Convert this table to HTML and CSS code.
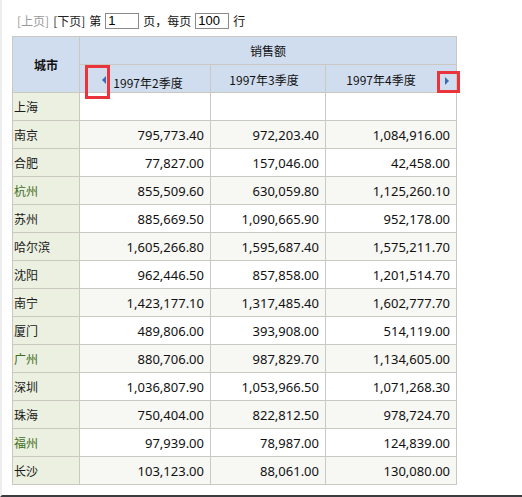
FILE: index.html
```html
<!DOCTYPE html>
<html lang="zh">
<head>
<meta charset="utf-8">
<link rel="stylesheet" href="styles.css">
</head>
<body>
<div class="page">
  <div class="pager">
    <span class="link disabled">[上页]</span>
    <span class="link">[下页]</span>
    <span>第</span>
    <span class="box w33">1</span>
    <span>页，每页</span>
    <span class="box w33">100</span>
    <span>行</span>
  </div>
  <div class="tablewrap">
    <table class="report">
      <colgroup>
        <col class="c1"><col class="c2"><col class="c3"><col class="c4">
      </colgroup>
      <thead>
        <tr class="h1">
          <th rowspan="2" class="city-h">城市</th>
          <th colspan="3" class="sales">销售额</th>
        </tr>
        <tr class="h2">
          <th class="q q2"><span class="tri-l"></span>1997年2季度</th>
          <th class="q q3">1997年3季度</th>
          <th class="q q4">1997年4季度<span class="tri-r"></span></th>
        </tr>
      </thead>
      <tbody>
        <tr><td class="city">上海</td><td></td><td></td><td></td></tr>
        <tr><td class="city">南京</td><td>795,773.40</td><td>972,203.40</td><td>1,084,916.00</td></tr>
        <tr><td class="city">合肥</td><td>77,827.00</td><td>157,046.00</td><td>42,458.00</td></tr>
        <tr><td class="city green">杭州</td><td>855,509.60</td><td>630,059.80</td><td>1,125,260.10</td></tr>
        <tr><td class="city">苏州</td><td>885,669.50</td><td>1,090,665.90</td><td>952,178.00</td></tr>
        <tr><td class="city">哈尔滨</td><td>1,605,266.80</td><td>1,595,687.40</td><td>1,575,211.70</td></tr>
        <tr><td class="city">沈阳</td><td>962,446.50</td><td>857,858.00</td><td>1,201,514.70</td></tr>
        <tr><td class="city">南宁</td><td>1,423,177.10</td><td>1,317,485.40</td><td>1,602,777.70</td></tr>
        <tr><td class="city">厦门</td><td>489,806.00</td><td>393,908.00</td><td>514,119.00</td></tr>
        <tr><td class="city green">广州</td><td>880,706.00</td><td>987,829.70</td><td>1,134,605.00</td></tr>
        <tr><td class="city">深圳</td><td>1,036,807.90</td><td>1,053,966.50</td><td>1,071,268.30</td></tr>
        <tr><td class="city">珠海</td><td>750,404.00</td><td>822,812.50</td><td>978,724.70</td></tr>
        <tr><td class="city green">福州</td><td>97,939.00</td><td>78,987.00</td><td>124,839.00</td></tr>
        <tr><td class="city">长沙</td><td>103,123.00</td><td>88,061.00</td><td>130,080.00</td></tr>
      </tbody>
    </table>
    <div class="mark mark-l"></div>
    <div class="mark mark-r"></div>
  </div>
</div>
</body>
</html>
```

FILE: styles.css
```css
html, body {
  margin: 0;
  padding: 0;
  background: #ffffff;
}
body {
  width: 522px;
  height: 497px;
  overflow: hidden;
  font-family: "Noto Sans CJK SC", "DejaVu Sans", sans-serif;
  font-size: 12px;
  color: #111;
  box-sizing: border-box;
  border-left: 2px solid #ededed;
  border-bottom: 2px solid #3a3c40;
}
.page {
  padding: 12px 0 0 10px;
}
.pager {
  display: flex;
  align-items: center;
  gap: 4px;
  height: 18px;
  margin-left: 5px;
  margin-bottom: 6px;
  font-size: 12px;
  line-height: 16px;
}
.pager .link { color: #222; }
.pager .link.disabled { color: #999; }
.box {
  display: inline-block;
  height: 16px;
  box-sizing: border-box;
  border: 1px solid #8a8a8a;
  font-family: "Liberation Sans", sans-serif;
  font-size: 13px;
  line-height: 14px;
  padding-left: 2px;
  color: #000;
}
.w33 { width: 34px; }
.tablewrap {
  position: relative;
  width: 446px;
}
.report {
  border-collapse: collapse;
  table-layout: fixed;
  width: 445px;
}
col.c1 { width: 67px; }
col.c2 { width: 131px; }
col.c3 { width: 115px; }
col.c4 { width: 131px; }
.report th, .report td {
  border: 1px solid #cbc8c2;
  height: 27px;
  padding: 0;
}
.report th {
  background: #d0ddef;
  font-weight: normal;
  font-size: 12px;
  line-height: 17px;
  color: #111;
}
.report th.city-h {
  font-weight: bold;
  font-size: 12px;
}
.report th.q {
  position: relative;
  padding-top: 2px;
  height: 25px;
}
.report th.q2 { padding-left: 6px; padding-top: 8px; height: 19px; }
.report th.q3 { padding-right: 8px; }
.report th.q4 { padding-right: 20px; }
.tri-l {
  position: absolute;
  left: 22px;
  top: 11px;
  width: 0;
  height: 0;
  border-top: 4px solid transparent;
  border-bottom: 4px solid transparent;
  border-right: 4px solid #3a6cb0;
}
.tri-r {
  position: absolute;
  right: 7px;
  top: 12px;
  width: 0;
  height: 0;
  border-top: 4px solid transparent;
  border-bottom: 4px solid transparent;
  border-left: 4px solid #3a6cb0;
}
.report td {
  text-align: right;
  padding-right: 6px;
  font-family: "Noto Sans", "DejaVu Sans", sans-serif;
  font-size: 13px;
  color: #111;
  background: #ffffff;
}
.report tbody tr:nth-child(even) td {
  background: #f7f7f4;
}
.report tbody tr td.city {
  text-align: left;
  padding-left: 1px;
  padding-right: 0;
  background: #ebf0e0;
  font-family: "Noto Sans CJK SC", sans-serif;
  font-size: 12px;
  color: #1a1a1a;
}
.report tbody tr td.city.green {
  color: #3d6e1c;
}
.mark {
  position: absolute;
  border: 3px solid #e8343a;
  box-sizing: border-box;
}
.mark-l {
  left: 73px;
  top: 29px;
  width: 25px;
  height: 34px;
}
.mark-r {
  left: 425px;
  top: 35px;
  width: 23px;
  height: 22px;
}
```
